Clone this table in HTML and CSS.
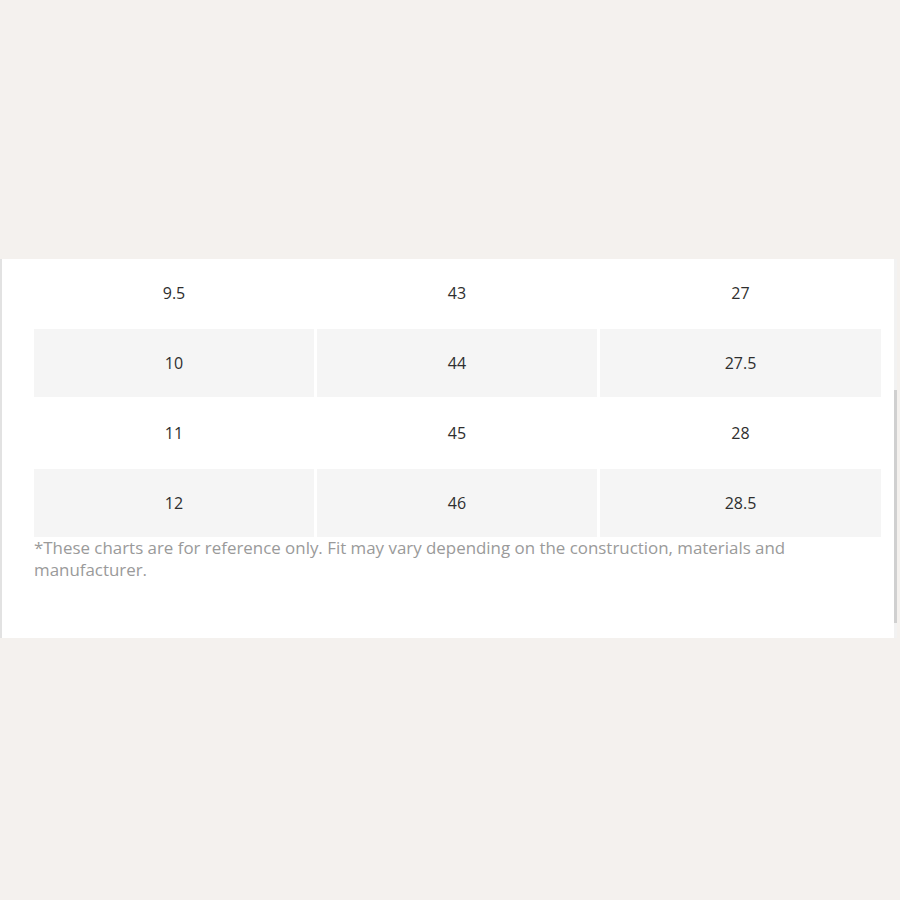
FILE: index.html
```
<!DOCTYPE html>
<html>
<head>
<meta charset="utf-8">
<link rel="stylesheet" href="styles.css">
</head>
<body>
<div class="panel">
  <div class="chart">
    <div class="cell">9.5</div><div class="cell">43</div><div class="cell">27</div>
    <div class="cell alt">10</div><div class="cell alt">44</div><div class="cell alt">27.5</div>
    <div class="cell">11</div><div class="cell">45</div><div class="cell">28</div>
    <div class="cell alt">12</div><div class="cell alt">46</div><div class="cell alt">28.5</div>
  </div>
  <p class="note">*These charts are for reference only. Fit may vary depending on the construction, materials and manufacturer.</p>
  <div class="scroll"><div class="thumb"></div></div>
</div>
</body>
</html>
```
FILE: styles.css
```
html, body {
  margin: 0;
  padding: 0;
  background: #f4f1ee;
  font-family: "Open Sans", "Liberation Sans", sans-serif;
}
.panel {
  position: relative;
  margin-top: 259px;
  width: 895px;
  height: 379px;
  background: #ffffff;
  border-left: 2px solid #e2e2e2;
  box-sizing: border-box;
  padding-left: 32px;
}
.chart {
  display: grid;
  grid-template-columns: 280px 280px 281px;
  grid-auto-rows: 68px;
  column-gap: 3px;
  row-gap: 2px;
}
.cell {
  display: flex;
  align-items: center;
  justify-content: center;
  padding-bottom: 1px;
  box-sizing: border-box;
  font-size: 16px;
  color: #2e2e2e;
}
.cell.alt {
  background: #f5f5f5;
}
.note {
  margin: 0;
  width: 800px;
  font-size: 16.9px;
  line-height: 22px;
  color: #9a9a9a;
}
.scroll {
  position: absolute;
  right: -2px;
  top: 0;
  width: 3px;
  height: 100%;
  background: #f2f2f2;
}
.thumb {
  position: absolute;
  left: 0;
  top: 131px;
  width: 3px;
  height: 233px;
  background: #d0d0d0;
}
```
